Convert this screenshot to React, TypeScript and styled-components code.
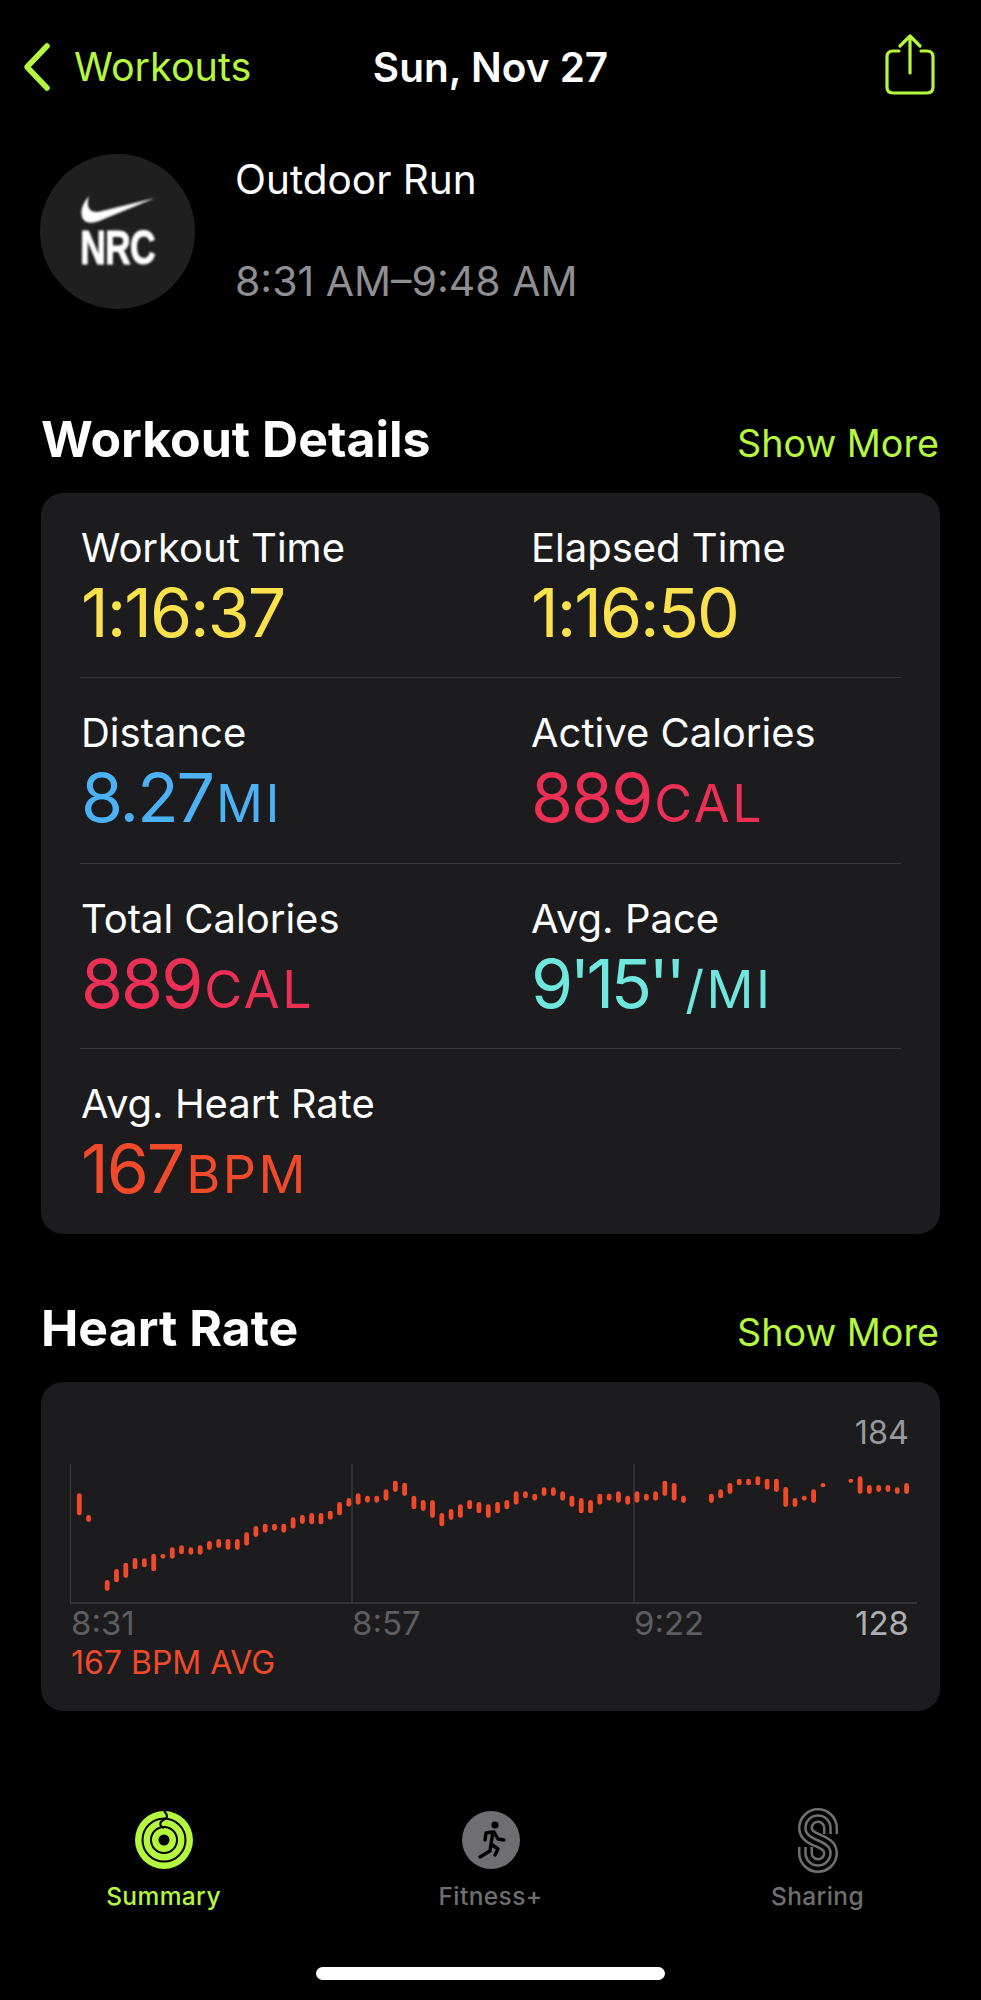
import React from 'react';
import styled, { createGlobalStyle } from 'styled-components';

const lime = '#b5f73f';
const red = '#f04a2a';
const dim = '#6f6f71';

const GlobalStyle = createGlobalStyle`
  html, body {
    margin: 0;
    padding: 0;
    background: #000;
  }
  body {
    font-family: Inter, "Liberation Sans", sans-serif;
    color: #fff;
    -webkit-font-smoothing: antialiased;
  }
`;

const Page = styled.div`
  width: 981px;
  height: 2000px;
  overflow: hidden;
  display: flex;
  flex-direction: column;
  background: #000;
`;

const NavBar = styled.header`
  height: 64px;
  margin-top: 33px;
  padding: 0 24px;
  display: grid;
  grid-template-columns: 1fr auto 1fr;
  align-items: center;
`;

const BackLink = styled.div`
  display: flex;
  align-items: center;
  gap: 22px;
  color: ${lime};
  font-size: 39.5px;
  svg {
    margin-left: -2px;
  }
`;

const NavTitle = styled.div`
  font-size: 40.5px;
  font-weight: 600;
`;

const ShareSlot = styled.div`
  display: flex;
  justify-content: flex-end;
  padding-right: 22px;
  margin-bottom: 6px;
`;

const WorkoutHead = styled.section`
  margin-top: 57px;
  padding-left: 40px;
  display: flex;
  gap: 40px;
`;

const AppBadge = styled.div`
  width: 155px;
  height: 155px;
  border-radius: 50%;
  background: #1f1f1f;
  display: flex;
  flex-direction: column;
  align-items: center;
  justify-content: center;
  gap: 3px;
`;

const BadgeText = styled.div`
  font-family: "Liberation Sans", sans-serif;
  font-size: 48px;
  line-height: 40px;
  font-weight: 700;
  letter-spacing: -1px;
  -webkit-text-stroke: 1px #fff;
  transform: scaleX(0.74);
  filter: blur(1.1px);
`;

const WorkoutText = styled.div`
  padding-top: 3px;
  display: flex;
  flex-direction: column;
  gap: 55px;
`;

const WorkoutName = styled.div`
  font-size: 40.5px;
  line-height: 46px;
`;

const WorkoutTime = styled.div`
  font-size: 41px;
  line-height: 46px;
  color: #8e8e93;
`;

const SectionHead = styled.div<{ $top: number }>`
  margin-top: ${({ $top }) => $top}px;
  padding: 0 42px 0 41px;
  height: 60px;
  display: flex;
  align-items: center;
  justify-content: space-between;
`;

const SectionTitle = styled.h2`
  margin: 0;
  font-size: 50px;
  font-weight: 700;
`;

const ShowMore = styled.div`
  color: ${lime};
  font-size: 37.7px;
  position: relative;
  top: 4px;
`;

const Card = styled.section`
  margin: 24px 41px 0;
  background: #1c1c1e;
  border-radius: 22px;
  box-sizing: border-box;
`;

const MetricsCard = styled(Card)`
  height: 741px;
  padding: 0 39px;
`;

const MetricRow = styled.div`
  height: 185.5px;
  display: grid;
  grid-template-columns: 450px 1fr;
  border-top: 1px solid #38383a;
  padding-top: 31px;
  box-sizing: border-box;
  &:first-child {
    border-top: 0;
    height: 184px;
  }
`;

const Metric = styled.div`
  padding-left: 1px;
`;

const MetricLabel = styled.div`
  font-size: 40px;
  line-height: 48px;
`;

const MetricValue = styled.div<{ $color: string; $tight?: boolean }>`
  color: ${({ $color }) => $color};
  font-size: 68px;
  line-height: 80px;
  letter-spacing: ${({ $tight }) => ($tight ? '-3.5px' : '-2px')};
`;

const MetricUnit = styled.span`
  margin-left: 3px;
  font-size: 52px;
  letter-spacing: 2.5px;
`;

const ChartCard = styled(Card)`
  height: 329px;
  position: relative;
`;

const ChartPeak = styled.div`
  position: absolute;
  top: 31px;
  right: 31px;
  font-size: 32.5px;
  color: #98989d;
`;

const ChartBody = styled.div`
  padding-top: 82px;
`;

const ChartSvg = styled.svg`
  display: block;
`;

const ChartAxis = styled.div`
  padding: 0 31px 0 30px;
  display: grid;
  grid-template-columns: 281px 282px 1fr auto;
  font-size: 33px;
  line-height: 38px;
  color: #5e5e60;
`;

const AxisMax = styled.div`
  color: #aeaeb2;
`;

const ChartAverage = styled.div`
  padding-left: 30px;
  margin-top: 3px;
  font-size: 32px;
  line-height: 36px;
  color: ${red};
`;

const TabBar = styled.nav`
  margin-top: auto;
  display: grid;
  grid-template-columns: repeat(3, 1fr);
  height: 129px;
`;

const Tab = styled.div<{ $active?: boolean }>`
  display: flex;
  flex-direction: column;
  align-items: center;
  gap: 13px;
  color: ${({ $active }) => ($active ? lime : dim)};
  font-size: 24.5px;
  line-height: 29px;
  font-weight: 500;
  letter-spacing: 0.4px;
`;

const TabIcon = styled.div`
  height: 58px;
  display: flex;
  align-items: center;
  justify-content: center;
`;

const HomeBar = styled.div`
  align-self: center;
  width: 349px;
  height: 13px;
  border-radius: 7px;
  background: #fff;
  margin: 27px 0 20px;
`;

const ChevronIcon = () => (
  <svg width="30" height="50" viewBox="0 0 30 50" fill="none">
    <path d="M25 4 L5 25 L25 46" stroke={lime} strokeWidth="5.5" strokeLinecap="round" strokeLinejoin="round" />
  </svg>
);

const ShareIcon = () => (
  <svg width="50" height="62" viewBox="0 0 50 62" fill="none" stroke={lime} strokeWidth="3.2" strokeLinecap="round" strokeLinejoin="round">
    <path d="M25 40 V3 M15 13 L25 3 L35 13" />
    <path d="M14 18 H8 Q2 18 2 24 V54 Q2 60 8 60 H42 Q48 60 48 54 V24 Q48 18 42 18 H36" />
  </svg>
);

const SwooshIcon = () => (
  <svg width="76" height="30" viewBox="0 0 76 30" style={{ filter: 'blur(0.9px)' }}>
    <path d="M9 1 C3 8 -1 17 3 24 C7 30 15 28 24 24 L75 3 L22 16 C12 19 5 15 9 1 Z" fill="#fff" />
  </svg>
);

const RingsIcon = () => (
  <svg width="58" height="58" viewBox="0 0 58 58">
    <circle cx="29" cy="29" r="29" fill={lime} />
    <circle cx="29" cy="29" r="21.5" fill="none" stroke="#000" strokeWidth="2" />
    <circle cx="29" cy="29" r="13" fill="none" stroke="#000" strokeWidth="2" />
    <circle cx="29" cy="29" r="5.5" fill="#000" />
    <path d="M29 0 C33 4 33 7 29 8.5 M29 8.5 C24 11 24 15 29 17" fill="none" stroke="#000" strokeWidth="2" />
  </svg>
);

const RunnerIcon = () => (
  <svg width="58" height="58" viewBox="0 0 58 58">
    <circle cx="29" cy="29" r="29" fill={dim} />
    <circle cx="33" cy="14" r="3.6" fill="#000" />
    <path d="M31 21 L24 22 L23 29 M32 21 L36 28 L42 29 M31 21 L29 33 L36 38 L33 44 M29 33 L28 40 L18 46" fill="none" stroke="#000" strokeWidth="3.4" strokeLinecap="round" strokeLinejoin="round" />
  </svg>
);

const sharingPath = 'M36.5 26 V20 A12.5 12.5 0 0 0 11.5 20 C11.5 34 36.5 31 36.5 45 A12.5 12.5 0 0 1 11.5 45 V39';

// three parallel lines, laid as a wide stroke with a black one and a thin one over it
const SharingIcon = () => (
  <svg width="48" height="65" viewBox="0 0 48 65" fill="none">
    <path d={sharingPath} stroke={dim} strokeWidth="15" />
    <path d={sharingPath} stroke="#000" strokeWidth="10" />
    <path d={sharingPath} stroke={dim} strokeWidth="2.6" />
  </svg>
);

// [top, bottom] of each bar, px from 4px above the plot; null where no sample was recorded
const heartBars: ([number, number] | null)[] = [
  [33.3, 55.3], [55, 62], null, [120, 131], [109, 122.3], [102.7, 118], [98, 109.3], [98.3, 107.3], [93.7, 111.3], [94, 98.7],
  [87.3, 98.7], [85.3, 94.3], [87.3, 94.7], [85.3, 94.7], [81, 90], [79, 88], [79, 90], [79, 90], [72.3, 85.7], [66, 77],
  [63.7, 72.7], [63.7, 70.7], [63.7, 72.7], [57.3, 68.7], [55, 64], [53, 64.3], [53, 64.3], [50.7, 59.7], [42, 55.3], [38, 46.7],
  [33.3, 44.7], [35.7, 42.7], [35.7, 42.7], [29.3, 40.7], [20.7, 32], [22.7, 36], [35.7, 49.3], [40, 51], [40, 58], [53, 66.3],
  [49, 60], [44.3, 58], [40, 49.3], [42, 53.3], [44.3, 58], [42, 53.3], [40, 49.3], [31.3, 44.7], [31.3, 38.3], [33.7, 40.7],
  [27.3, 36], [27.3, 36], [31.3, 40.7], [35.7, 47], [38, 53.3], [40, 53.3], [33.7, 44.7], [33.7, 40.7], [31.3, 42.7], [35.7, 44.7],
  [31.3, 42.7], [33.7, 40.7], [31.3, 40.7], [20.7, 36], [23, 40.7], [35.7, 43], null, null, [33.7, 43], [29.3, 38.3],
  [23, 34], [18.7, 25.3], [18.7, 25.3], [16.3, 25.3], [18.7, 29.7], [18.7, 32], [27, 47], [38, 47], [35.7, 40.7], [29.3, 43],
  [23, 27.3], null, null, [18.7, 23], [16.3, 34], [25, 34], [25, 32], [25, 32], [27.3, 34], [23, 34],
];

const HeartRateChart = () => (
  <ChartSvg width="899" height="140" viewBox="0 0 899 140">
    <g stroke="#3a3a3c" strokeWidth="1.4">
      <line x1="29.5" y1="0" x2="29.5" y2="139" />
      <line x1="311" y1="0" x2="311" y2="139" />
      <line x1="593" y1="0" x2="593" y2="139" />
      <line x1="29" y1="139" x2="876" y2="139" />
    </g>
    <g transform="translate(0 -4)">
      {heartBars.map((bar, i) =>
        bar ? (
          <rect
            key={i}
            x={38.3 + 9.295 * i - 2.4}
            y={bar[0]}
            width="4.8"
            height={bar[1] - bar[0]}
            rx="2.4"
            fill={red}
          />
        ) : null
      )}
    </g>
  </ChartSvg>
);

const metrics = [
  [
    { label: 'Workout Time', value: '1:16:37', color: '#fbe14b' },
    { label: 'Elapsed Time', value: '1:16:50', color: '#fbe14b' },
  ],
  [
    { label: 'Distance', value: '8.27', unit: 'MI', color: '#4cb2f5' },
    { label: 'Active Calories', value: '889', unit: 'CAL', color: '#ec2f55' },
  ],
  [
    { label: 'Total Calories', value: '889', unit: 'CAL', color: '#ec2f55' },
    { label: 'Avg. Pace', value: "9'15''", unit: '/MI', color: '#6fe6de', tight: true },
  ],
  [{ label: 'Avg. Heart Rate', value: '167', unit: 'BPM', color: '#f04a2a' }],
];

export default function App() {
  return (
    <Page>
      <GlobalStyle />
      <NavBar>
        <BackLink>
          <ChevronIcon />
          Workouts
        </BackLink>
        <NavTitle>Sun, Nov 27</NavTitle>
        <ShareSlot>
          <ShareIcon />
        </ShareSlot>
      </NavBar>

      <WorkoutHead>
        <AppBadge>
          <SwooshIcon />
          <BadgeText>NRC</BadgeText>
        </AppBadge>
        <WorkoutText>
          <WorkoutName>Outdoor Run</WorkoutName>
          <WorkoutTime>8:31 AM–9:48 AM</WorkoutTime>
        </WorkoutText>
      </WorkoutHead>

      <SectionHead $top={100}>
        <SectionTitle>Workout Details</SectionTitle>
        <ShowMore>Show More</ShowMore>
      </SectionHead>
      <MetricsCard>
        {metrics.map((row, r) => (
          <MetricRow key={r}>
            {row.map((m) => (
              <Metric key={m.label}>
                <MetricLabel>{m.label}</MetricLabel>
                <MetricValue $color={m.color} $tight={m.tight}>
                  {m.value}
                  {m.unit && <MetricUnit>{m.unit}</MetricUnit>}
                </MetricValue>
              </Metric>
            ))}
          </MetricRow>
        ))}
      </MetricsCard>

      <SectionHead $top={64}>
        <SectionTitle>Heart Rate</SectionTitle>
        <ShowMore>Show More</ShowMore>
      </SectionHead>
      <ChartCard>
        <ChartPeak>184</ChartPeak>
        <ChartBody>
          <HeartRateChart />
          <ChartAxis>
            <div>8:31</div>
            <div>8:57</div>
            <div>9:22</div>
            <AxisMax>128</AxisMax>
          </ChartAxis>
          <ChartAverage>167 BPM AVG</ChartAverage>
        </ChartBody>
      </ChartCard>

      <TabBar>
        <Tab $active>
          <TabIcon>
            <RingsIcon />
          </TabIcon>
          Summary
        </Tab>
        <Tab>
          <TabIcon>
            <RunnerIcon />
          </TabIcon>
          Fitness+
        </Tab>
        <Tab>
          <TabIcon>
            <SharingIcon />
          </TabIcon>
          Sharing
        </Tab>
      </TabBar>
      <HomeBar />
    </Page>
  );
}
